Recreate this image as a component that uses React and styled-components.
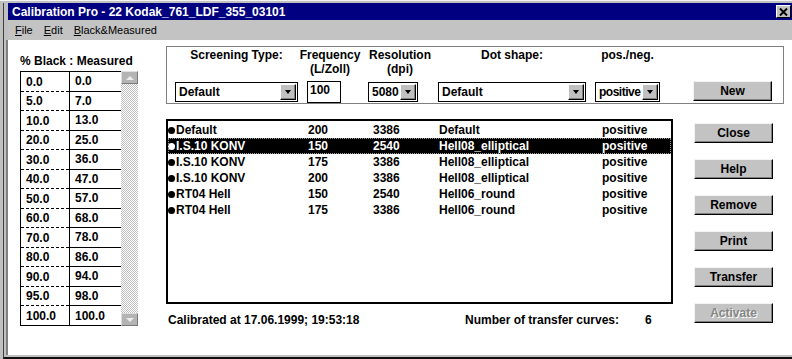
import React from "react";
import styled, { createGlobalStyle } from "styled-components";

const GlobalStyle = createGlobalStyle`
  html, body { margin: 0; padding: 0; background: #c0c0c0; }
  body { font-family: "Liberation Sans", Arial, sans-serif; font-size: 12px; color: #000; }
  * { box-sizing: border-box; }
`;

const Frame = styled.div`
  width: 792px;
  height: 359px;
  overflow: hidden;
  background: #c0c0c0;
  border-top: 1px solid #f4f4f4;
  padding: 2px 0 0 3px;
`;

const Win = styled.div`
  height: 100%;
  display: flex;
  flex-direction: column;
  border-left: 1px solid #404040;
  border-bottom: 2px solid #101010;
  padding: 0 0 2px 4px;
`;

const TitleBar = styled.div`
  height: 17px;
  flex: none;
  display: flex;
  align-items: center;
  justify-content: space-between;
  background: #000080;
  color: #fff;
  font-weight: bold;
  font-size: 12px;
  padding-left: 4px;
`;

const CloseBox = styled.div`
  width: 15px;
  height: 13px;
  margin-right: 1px;
  background: #c0c0c0;
  border: 1px solid;
  border-color: #fff #000 #000 #fff;
  display: flex;
  align-items: center;
  justify-content: center;
`;

const MenuBar = styled.div`
  height: 20px;
  flex: none;
  display: flex;
  align-items: center;
  gap: 11px;
  padding-left: 7px;
  background: #c3c3c3;
  font-size: 11px;
  u { text-decoration: underline; }
`;

const Client = styled.div`
  flex: 1;
  background: #fff;
  display: flex;
  padding: 6px 0 0 12px;
  box-shadow: -2px 0 0 #808080;
`;

const LeftPanel = styled.div`
  width: 118px;
  flex: none;
  padding-top: 7px;
`;

const Label = styled.div`
  font-weight: bold;
  line-height: 16px;
  margin-bottom: 2px;
  white-space: nowrap;
`;

const TableWrap = styled.div`
  display: flex;
  height: 255px;
`;

const Grid = styled.div`
  width: 101px;
  border: 1px solid #000;
  border-right: none;
  display: flex;
  flex-direction: column;
`;

const GridRow = styled.div`
  display: flex;
  height: 19.5px;
  flex: none;
  font-weight: bold;
  &:last-child { flex: 1; }
`;

const PctCell = styled.div`
  width: 49px;
  border-right: 1px solid #000;
  padding-left: 5px;
  display: flex;
  align-items: center;
  background: ${p => (p.$last ? "none" : "linear-gradient(to right, #000 60%, transparent 0) left bottom / 5px 1px repeat-x")};
`;

const ValCell = styled.div`
  flex: 1;
  padding-left: 5px;
  display: flex;
  align-items: center;
  border-bottom: ${p => (p.$last ? "none" : "1px solid #000")};
`;

const Scroll = styled.div`
  width: 17px;
  display: flex;
  flex-direction: column;
`;

const ScrollArrow = styled.div`
  height: 13px;
  flex: none;
  background: #b4b4b4;
  border: 1px solid;
  border-color: #dedede #7a7a7a #7a7a7a #dedede;
  display: flex;
  align-items: center;
  justify-content: center;
  &::after {
    content: "";
    border-left: 4px solid transparent;
    border-right: 4px solid transparent;
    ${p => (p.$down ? "border-top: 4px solid #ececec;" : "border-bottom: 4px solid #ececec;")}
  }
`;

const Track = styled.div`
  flex: 1;
  background: repeating-conic-gradient(#c0c0c0 0 25%, #fff 0 50%) 0 0 / 2px 2px;
`;

const RightPanel = styled.div`
  width: 618px;
  margin-left: 28px;
  display: flex;
  flex-direction: column;
`;

const TopBox = styled.div`
  height: 58px;
  border: 1px solid #808080;
  padding: 1px 0 0 8px;
  display: grid;
  grid-template-columns: 123px 64px 76px 148px 83px 115px;
  grid-template-rows: 28px auto;
  row-gap: 5px;
  align-items: start;
`;

const Head = styled.div`
  font-weight: bold;
  line-height: 14px;
  text-align: center;
  white-space: nowrap;
`;

const SelectBox = styled.div`
  display: flex;
  align-items: center;
  width: ${p => p.$w}px;
  height: 20px;
  margin: 1px 0 0 ${p => p.$ml || 0}px;
  border: 1px solid #000;
  background: #fff;
  padding: 1px;
`;

const SelectText = styled.span`
  flex: 1;
  padding-left: 2px;
  font-weight: bold;
  letter-spacing: ${p => (p.$tight ? "-0.5px" : "0")};
  white-space: nowrap;
  overflow: hidden;
`;

const DropButton = styled.span`
  width: 16px;
  height: 16px;
  flex: none;
  background: #c0c0c0;
  border: 1px solid;
  border-color: #fff #000 #000 #fff;
  box-shadow: inset -1px -1px #808080;
  display: flex;
  align-items: center;
  justify-content: center;
  &::after {
    content: "";
    border-left: 3px solid transparent;
    border-right: 3px solid transparent;
    border-top: 4px solid #000;
  }
`;

const NumField = styled.div`
  width: 34px;
  height: 22px;
  margin-left: 9px;
  border: 1px solid #000;
  padding: 1px 2px;
  font-weight: bold;
  line-height: 14px;
`;

const Btn = styled.div`
  width: 79px;
  height: 20px;
  margin-left: ${p => p.$ml || 0}px;
  background: #c3c3c3;
  border: 1px solid;
  border-color: #f4f4f4 #000 #000 #f4f4f4;
  box-shadow: inset -1px -1px #808080;
  display: flex;
  align-items: center;
  justify-content: center;
  font-weight: bold;
  color: ${p => (p.$disabled ? "#868686" : "#000")};
  text-shadow: ${p => (p.$disabled ? "1px 1px 0 #fff" : "none")};
`;

const Lower = styled.div`
  display: flex;
  margin-top: 15px;
`;

const ListCol = styled.div`
  width: 507px;
  display: flex;
  flex-direction: column;
`;

const ListBox = styled.div`
  height: 185px;
  border: 2px solid #000;
  padding-top: 1px;
`;

const ListRow = styled.div`
  display: grid;
  grid-template-columns: 7px 133px 65px 66px 163px auto;
  align-items: center;
  height: 16px;
  font-weight: bold;
  white-space: nowrap;
  background: ${p => (p.$sel ? "#000" : "transparent")};
  color: ${p => (p.$sel ? "#fff" : "#000")};
  outline: ${p => (p.$sel ? "1px dotted #9a9a9a" : "none")};
  outline-offset: -1px;
  & > span:nth-child(2) { padding-left: 1px; }
`;

const Bullet = styled.span`
  width: 7px;
  height: 7px;
  border-radius: 50%;
  background: currentColor;
`;

const Status = styled.div`
  display: grid;
  grid-template-columns: 297px 180px auto;
  padding-left: 2px;
  margin-top: 8px;
  line-height: 16px;
  font-weight: bold;
  white-space: nowrap;
`;

const BtnCol = styled.div`
  margin-left: 21px;
  padding-top: 4px;
  display: flex;
  flex-direction: column;
  gap: 16px;
`;

const curve = [
  ["0.0", "0.0"], ["5.0", "7.0"], ["10.0", "13.0"], ["20.0", "25.0"],
  ["30.0", "36.0"], ["40.0", "47.0"], ["50.0", "57.0"], ["60.0", "68.0"],
  ["70.0", "78.0"], ["80.0", "86.0"], ["90.0", "94.0"], ["95.0", "98.0"],
  ["100.0", "100.0"],
];

const screens = [
  { name: "Default", freq: "200", res: "3386", dot: "Default", pol: "positive" },
  { name: "I.S.10 KONV", freq: "150", res: "2540", dot: "Hell08_elliptical", pol: "positive", sel: true },
  { name: "I.S.10 KONV", freq: "175", res: "3386", dot: "Hell08_elliptical", pol: "positive" },
  { name: "I.S.10 KONV", freq: "200", res: "3386", dot: "Hell08_elliptical", pol: "positive" },
  { name: "RT04 Hell", freq: "150", res: "2540", dot: "Hell06_round", pol: "positive" },
  { name: "RT04 Hell", freq: "175", res: "3386", dot: "Hell06_round", pol: "positive" },
];

const Select = ({ w, ml, value, tight }) => (
  <SelectBox $w={w} $ml={ml}>
    <SelectText $tight={tight}>{value}</SelectText>
    <DropButton />
  </SelectBox>
);

export default function App() {
  return (
    <>
      <GlobalStyle />
      <Frame>
        <Win>
          <TitleBar>
            <span>Calibration Pro - 22 Kodak_761_LDF_355_03101</span>
            <CloseBox>
              <svg width="9" height="8" viewBox="0 0 9 8">
                <path d="M1 0.5 L8 7.5 M8 0.5 L1 7.5" stroke="#000" strokeWidth="2" />
              </svg>
            </CloseBox>
          </TitleBar>
          <MenuBar>
            <span><u>F</u>ile</span>
            <span><u>E</u>dit</span>
            <span><u>B</u>lack&amp;Measured</span>
          </MenuBar>
          <Client>
            <LeftPanel>
              <Label>% Black : Measured</Label>
              <TableWrap>
                <Grid>
                  {curve.map(([pct, val], i) => {
                    const last = i === curve.length - 1;
                    return (
                      <GridRow key={pct}>
                        <PctCell $last={last}>{pct}</PctCell>
                        <ValCell $last={last}>{val}</ValCell>
                      </GridRow>
                    );
                  })}
                </Grid>
                <Scroll>
                  <ScrollArrow />
                  <Track />
                  <ScrollArrow $down />
                </Scroll>
              </TableWrap>
            </LeftPanel>

            <RightPanel>
              <TopBox>
                <Head>Screening Type:</Head>
                <Head>Frequency<br />(L/Zoll)</Head>
                <Head>Resolution<br />(dpi)</Head>
                <Head>Dot shape:</Head>
                <Head>pos./neg.</Head>
                <div />
                <Select w={123} value="Default" />
                <NumField>100</NumField>
                <Select w={50} ml={6} value="5080" />
                <Select w={148} value="Default" />
                <Select w={65} ml={9} value="positive" tight />
                <Btn $ml={24}>New</Btn>
              </TopBox>

              <Lower>
                <ListCol>
                  <ListBox>
                    {screens.map((s, i) => (
                      <ListRow key={i} $sel={s.sel}>
                        <Bullet />
                        <span>{s.name}</span>
                        <span>{s.freq}</span>
                        <span>{s.res}</span>
                        <span>{s.dot}</span>
                        <span>{s.pol}</span>
                      </ListRow>
                    ))}
                  </ListBox>
                  <Status>
                    <span>Calibrated at 17.06.1999; 19:53:18</span>
                    <span>Number of transfer curves:</span>
                    <span>6</span>
                  </Status>
                </ListCol>
                <BtnCol>
                  <Btn>Close</Btn>
                  <Btn>Help</Btn>
                  <Btn>Remove</Btn>
                  <Btn>Print</Btn>
                  <Btn>Transfer</Btn>
                  <Btn $disabled>Activate</Btn>
                </BtnCol>
              </Lower>
            </RightPanel>
          </Client>
        </Win>
      </Frame>
    </>
  );
}
